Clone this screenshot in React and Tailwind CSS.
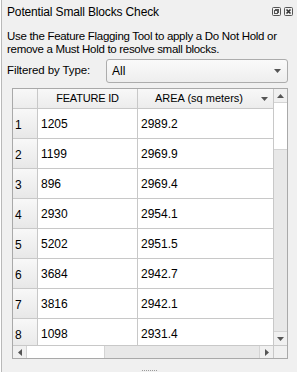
import React from "react";

const rows = [
  ["1", "1205", "2989.2"],
  ["2", "1199", "2969.9"],
  ["3", "896", "2969.4"],
  ["4", "2930", "2954.1"],
  ["5", "5202", "2951.5"],
  ["6", "3684", "2942.7"],
  ["7", "3816", "2942.1"],
  ["8", "1098", "2931.4"],
];

function Tri({ dir = "down", className = "" }) {
  const pts = {
    down: "0,0 7,0 3.5,4",
    up: "0,4 7,4 3.5,0",
    left: "4,0 4,7 0,3.5",
    right: "0,0 0,7 4,3.5",
  }[dir];
  const w = dir === "down" || dir === "up" ? 7 : 4;
  const h = dir === "down" || dir === "up" ? 4 : 7;
  return (
    <svg width={w} height={h} viewBox={`0 0 ${w} ${h}`} className={className}>
      <polygon points={pts} fill="#555" />
    </svg>
  );
}

export default function App() {
  return (
    <div
      className="w-[297px] h-[372px] bg-[#f0f0f0] text-black flex flex-col overflow-hidden border-l border-[#b9b9b9] ml-[1px]"
      style={{ fontFamily: '"Liberation Sans", Arial, sans-serif' }}
    >
      {/* title bar */}
      <div className="h-[24px] flex items-center pl-[5px] pr-[5px]">
        <span className="text-[12px] leading-none tracking-[-0.15px]">Potential Small Blocks Check</span>
        <div className="ml-auto flex items-center gap-[3px] mt-[-1px]">
          <svg width="9" height="9" viewBox="0 0 9 9">
            <rect x="0.5" y="0.5" width="8" height="8" rx="1" fill="none" stroke="#555" />
            <rect x="3.5" y="2.5" width="3" height="3" fill="none" stroke="#555" />
            <rect x="2.5" y="3.5" width="3" height="3" fill="#f0f0f0" stroke="#555" />
          </svg>
          <svg width="9" height="9" viewBox="0 0 9 9">
            <rect x="0.5" y="0.5" width="8" height="8" rx="1" fill="none" stroke="#555" />
            <path d="M2.5 2.5 L6.5 6.5 M6.5 2.5 L2.5 6.5" stroke="#333" strokeWidth="1.6" />
          </svg>
        </div>
      </div>

      {/* description */}
      <div className="mt-[6px] pl-[5px] text-[11.5px] leading-[13px] tracking-[-0.3px] whitespace-nowrap">
        <div>Use the Feature Flagging Tool to apply a Do Not Hold or</div>
        <div>remove a Must Hold to resolve small blocks.</div>
      </div>

      {/* filter row */}
      <div className="mt-[3px] flex items-center pl-[5px] pr-[10px] h-[24px]">
        <span className="text-[11.5px] tracking-[-0.1px] w-[99px]">Filtered by Type:</span>
        <div className="flex-1 h-[24px] bg-gradient-to-b from-[#fafafa] to-[#eeeeee] border border-[#acacac] rounded-[3px] flex items-center pl-[5px] pr-[6px]">
          <span className="text-[12px]">All</span>
          <Tri dir="down" className="ml-auto" />
        </div>
      </div>

      {/* table */}
      <div className="mt-[5px] ml-[10px] w-[276px] h-[271px] border border-[#a9a9a9] bg-white flex flex-col">
        <div className="flex h-[256px]">
          {/* cells */}
          <div className="w-[260px] flex flex-col overflow-hidden text-[12px]">
            {/* header */}
            <div className="flex h-[20px] shrink-0 border-b border-[#c8c8c8] bg-gradient-to-b from-[#f8f8f8] to-[#ececec] text-[11px]">
              <div className="w-[25px] border-r border-[#c8c8c8]" />
              <div className="w-[100px] border-r border-[#c8c8c8] flex items-center justify-center tracking-[-0.2px]">
                FEATURE ID
              </div>
              <div className="flex-1 flex items-center pl-[17px] pr-[5px]">
                <span>AREA (sq meters)</span>
                <Tri dir="down" className="ml-auto" />
              </div>
            </div>
            {rows.map((r) => (
              <div key={r[0]} className="flex h-[30px] shrink-0 border-b border-[#c8c8c8]">
                <div className="w-[25px] border-r border-[#c8c8c8] bg-gradient-to-b from-[#f8f8f8] to-[#e8e8e8] flex items-center pl-[2px] pt-[3px]">
                  {r[0]}
                </div>
                <div className="w-[100px] border-r border-[#c8c8c8] flex items-center pl-[3px] pt-[1px]">
                  {r[1]}
                </div>
                <div className="flex-1 flex items-center pl-[3px] pt-[1px]">{r[2]}</div>
              </div>
            ))}
          </div>
          {/* vertical scrollbar */}
          <div className="w-[14px] border-l border-[#c8c8c8] bg-[#e8e8e8] flex flex-col">
            <div className="h-[14px] bg-[#f0f0f0] flex items-center justify-center border-b border-[#d4d4d4]">
              <Tri dir="up" />
            </div>
            <div className="h-[47px] bg-white border-b border-[#d4d4d4]" />
            <div className="flex-1" />
            <div className="h-[14px] bg-[#f0f0f0] flex items-center justify-center border-t border-[#d4d4d4]">
              <Tri dir="down" />
            </div>
          </div>
        </div>
        {/* horizontal scrollbar */}
        <div className="flex h-[13px] border-t border-[#c8c8c8]">
          <div className="w-[260px] flex bg-[#e8e8e8]">
            <div className="w-[14px] bg-[#f0f0f0] flex items-center justify-center border-r border-[#d4d4d4]">
              <Tri dir="left" />
            </div>
            <div className="w-[78px] bg-white border-r border-[#d4d4d4]" />
            <div className="flex-1" />
            <div className="w-[14px] bg-[#f0f0f0] flex items-center justify-center border-l border-[#d4d4d4]">
              <Tri dir="right" />
            </div>
          </div>
          <div className="flex-1 bg-[#f0f0f0] border-l border-[#c8c8c8]" />
        </div>
      </div>

      {/* grip */}
      <div className="flex-1 flex items-end justify-center">
        <svg width="16" height="3" viewBox="0 0 16 3">
          {[0, 2, 4, 6, 8, 10, 12, 14].map((x) => (
            <rect key={x} x={x} y="1" width="1" height="1" fill="#9a9a9a" />
          ))}
        </svg>
      </div>
    </div>
  );
}
